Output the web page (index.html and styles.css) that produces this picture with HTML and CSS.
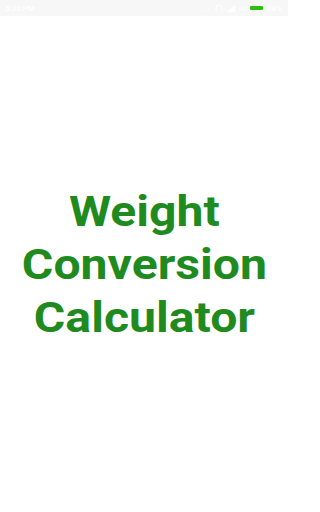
FILE: index.html
```html
<!DOCTYPE html>
<html>
<head>
<meta charset="utf-8">
<link rel="stylesheet" href="styles.css">
</head>
<body>
<div class="screen">
  <div class="statusbar">
    <span class="time">5:30 PM</span>
    <div class="status-icons">
      <span class="dots">...</span>
      <svg class="ic" width="8" height="8" viewBox="0 0 8 8"><path d="M1 8V4a3 3 0 0 1 6 0v4" fill="none" stroke="#fff" stroke-width="1"/></svg>
      <svg class="ic" width="8" height="7" viewBox="0 0 8 7"><path d="M0 7L8 0V7Z" fill="#fff"/></svg>
      <span class="small">4G</span>
      <span class="battery"></span>
      <span class="pct">88%</span>
    </div>
  </div>
  <main class="content">
    <h1 class="title">Weight<br>Conversion<br>Calculator</h1>
  </main>
</div>
</body>
</html>
```
FILE: styles.css
```css
html, body {
  margin: 0;
  padding: 0;
  background: #ffffff;
}
.screen {
  width: 288px;
  height: 512px;
  overflow: hidden;
  display: flex;
  flex-direction: column;
  font-family: Roboto, "Liberation Sans", sans-serif;
}
.statusbar {
  height: 16px;
  flex: none;
  background: #f7f7f7;
  display: flex;
  align-items: center;
  justify-content: space-between;
  padding: 0 6px 0 5px;
  color: #ffffff;
  font-size: 8px;
  font-weight: 500;
}
.status-icons {
  display: flex;
  align-items: center;
  gap: 4px;
}
.dots { letter-spacing: 1px; }
.small { font-size: 6px; }
.battery {
  width: 13px;
  height: 4px;
  background: #2bc20e;
  border-radius: 1px;
}
.content {
  flex: 1;
  display: flex;
  align-items: center;
  justify-content: center;
}
.title {
  margin: 0;
  text-align: center;
  color: #1f8b1f;
  font-size: 43px;
  font-weight: 700;
  line-height: 53px;
  transform: scaleX(1.12);
}
```
